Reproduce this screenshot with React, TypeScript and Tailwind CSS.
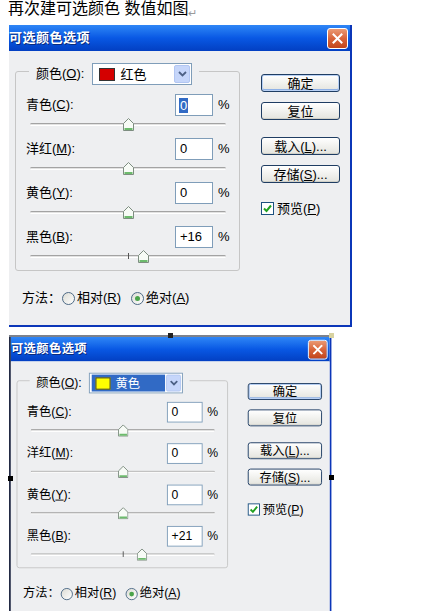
// @ts-nocheck
const FONT = "font-['Liberation_Sans','Noto_Sans_CJK_SC',sans-serif]";

const ROWS = [
  { name: '青色', key: 'C' },
  { name: '洋红', key: 'M' },
  { name: '黄色', key: 'Y' },
  { name: '黑色', key: 'B' },
];

function CloseBtn() {
  return (
    <div className="w-[21px] h-[21px] rounded-[3px] border border-white bg-linear-to-b from-[#ea9a74] via-[#d8643a] to-[#c2441a] flex items-center justify-center">
      <svg width="11" height="11" viewBox="0 0 11 11">
        <path d="M1.5 1.5 L9.5 9.5 M9.5 1.5 L1.5 9.5" stroke="#fff" strokeWidth="2" strokeLinecap="square" />
      </svg>
    </div>
  );
}

function Thumb({ value }) {
  const left = 14 + (value + 100) * 0.98 - 5.5;
  return (
    <svg className="absolute top-[2px]" style={{ left }} width="11" height="13" viewBox="0 0 11 13">
      <path d="M0.5 5.5 L5.5 0.5 L10.5 5.5 V12.5 H0.5 Z" fill="#f7fbf6" stroke="#7d8d80" />
      <path d="M1.5 11 H9.5" stroke="#6dbb6d" strokeWidth="2" />
    </svg>
  );
}

function Slider({ value, tick }) {
  return (
    <div className="relative h-[22px]">
      <div className="absolute top-[7px] left-[14px] right-[13px] h-[3px] rounded-full border-t border-[#a3a3a3] border-b border-b-white bg-[#e2e2e2]" />
      {tick && <div className="absolute top-[5px] left-[112px] w-[1px] h-[6px] bg-[#555]" />}
      <Thumb value={value} />
    </div>
  );
}

function Btn({ children, primary }) {
  return (
    <div
      className={
        'w-[79px] h-[18px] rounded-[3px] border border-[#1f3d63] bg-linear-to-b from-white to-[#e4e4de] flex items-center justify-center text-[13px] leading-none text-black ' +
        (primary ? 'shadow-[inset_0_0_0_1px_#b8d0f4,inset_0_-1px_0_1px_#8fb1e6]' : 'shadow-[inset_0_-1px_0_0_#d0d0c8]')
      }
    >
      {children}
    </div>
  );
}

function Radio({ checked }) {
  return (
    <span className="w-[13px] h-[13px] rounded-full border border-[#4d6a86] bg-linear-to-br from-[#dcdcd5] to-white flex items-center justify-center">
      {checked && <span className="w-[5px] h-[5px] rounded-full bg-[#4aa34a]" />}
    </span>
  );
}

function Dialog({ color, values, selectFirst, second }) {
  return (
    <div
      className={
        'w-[343px] h-[302px] flex flex-col border-r-[2px] border-b-[2px] border-[#0b36b8] ' +
        (second ? 'border-l-[2px] border-l-[#222a44]' : '')
      }
    >
      <div className="h-[26px] flex items-center justify-between pr-[2px] bg-linear-to-b from-[#2f86f6] via-[#0958e4] to-[#033fc2]">
        <span className="text-[13px] font-bold text-white tracking-[0.5px] [text-shadow:1px_1px_0_#0a2a7a]">可选颜色选项</span>
        <CloseBtn />
      </div>
      <div className="flex-1 bg-[#eeeff1] flex">
        <div className="pl-[6px] pt-[20px]">
          <div className="w-[225px] border border-[#c6c6c6] rounded-[3px]">
            <div className="-mt-[9px] ml-[13px] px-[7px] w-fit h-[22px] flex items-center bg-[#eeeff1]">
              <span className="text-[13px]">
                颜色(<span className="underline">O</span>):
              </span>
              <div className="ml-[8px] w-[100px] h-[22px] border border-[#7f9db9] bg-white flex items-center">
                <div className={'flex-1 h-[18px] ml-[2px] flex items-center ' + (color === 'yellow' ? 'bg-[#316ac5] text-white' : '')}>
                  <span
                    className={
                      'ml-[4px] w-[16px] h-[13px] border border-[#333] ' + (color === 'yellow' ? 'bg-[#ffff00]' : 'bg-[#d40000]')
                    }
                  />
                  <span className="ml-[5px] text-[13px] leading-none">{color === 'yellow' ? '黄色' : '红色'}</span>
                </div>
                <div className="ml-[1px] mr-[1px] w-[16px] h-[18px] rounded-[2px] bg-[#c6d6fa] border border-[#b2c6f2] flex items-center justify-center">
                  <svg width="9" height="6" viewBox="0 0 9 6">
                    <path d="M1 1 L4.5 4.5 L8 1" fill="none" stroke="#4d6185" strokeWidth="1.8" />
                  </svg>
                </div>
              </div>
            </div>
            <div className="mt-[9px]">
              {ROWS.map((r, i) => {
                const v = values[i];
                const txt = v > 0 ? '+' + v : String(v);
                return (
                  <div key={r.key}>
                    <div className="h-[22px] flex items-center px-[10px] text-[13px]">
                      <span className="flex-1">
                        {r.name}(<span className="underline">{r.key}</span>):
                      </span>
                      <div className="w-[38px] h-[22px] border border-[#7f9db9] bg-white flex items-center pl-[3px]">
                        {selectFirst && i === 0 ? (
                          <span className="bg-[#316ac5] text-white px-[1px] leading-[15px]">{txt}</span>
                        ) : (
                          <span className="pl-[1px]">{txt}</span>
                        )}
                      </div>
                      <span className="ml-[5px] w-[11px]">%</span>
                    </div>
                    <Slider value={v} tick={i === 3} />
                  </div>
                );
              })}
            </div>
          </div>
          <div className="mt-[19px] pl-[7px] h-[16px] flex items-center text-[13px]">
            <span>方法：</span>
            <span className="ml-[1px]"><Radio /></span>
            <span className="ml-[2px]">
              相对(<span className="underline">R</span>)
            </span>
            <span className="ml-[10px]"><Radio checked /></span>
            <span className="ml-[2px]">
              绝对(<span className="underline">A</span>)
            </span>
          </div>
        </div>
        <div className="ml-[21px] pt-[23px] flex flex-col">
          <Btn primary>确定</Btn>
          <div className="mt-[10px]"><Btn>复位</Btn></div>
          <div className="mt-[17px]">
            <Btn>
              载入(<span className="underline">L</span>)...
            </Btn>
          </div>
          <div className="mt-[10px]">
            <Btn>
              存储(<span className="underline">S</span>)...
            </Btn>
          </div>
          <div className="mt-[16px] flex items-center text-[13px]">
            <span className="w-[13px] h-[13px] border border-[#1c5180] bg-white flex items-center justify-center">
              <svg width="9" height="9" viewBox="0 0 9 9">
                <path d="M1 4.5 L3.5 7 L8 1.5" fill="none" stroke="#21a121" strokeWidth="2" />
              </svg>
            </span>
            <span className="ml-[3px]">
              预览(<span className="underline">P</span>)
            </span>
          </div>
        </div>
      </div>
    </div>
  );
}

export default function App() {
  return (
    <div className={'relative w-[433px] h-[611px] overflow-hidden bg-white text-black ' + FONT}>
      <div className="h-[25px] pl-[8px] text-[16px] leading-[18px] flex items-start">
        <span>再次建可选颜色 数值如图</span>
        <span className="text-[11px] text-[#9a9a9a] mt-[4px]">↵</span>
      </div>
      <div className="ml-[9px]">
        <Dialog color="red" values={[0, 0, 0, 16]} selectFirst />
      </div>
      <div className="ml-[9px] mt-[8px] w-[323px] h-[2px] bg-[#7d828c]" />
      <div className="ml-[9px] origin-top-left scale-[0.94]">
        <Dialog color="yellow" values={[0, 0, 0, 21]} second />
      </div>
      <div className="absolute left-[168px] top-[333px] w-[5px] h-[5px] bg-[#222]" />
      <div className="absolute left-[329px] top-[333px] w-[5px] h-[5px] bg-[#d8d2a0]" />
      <div className="absolute left-[8px] top-[476px] w-[5px] h-[5px] bg-black" />
      <div className="absolute left-[329px] top-[475px] w-[5px] h-[5px] bg-black" />
    </div>
  );
}
